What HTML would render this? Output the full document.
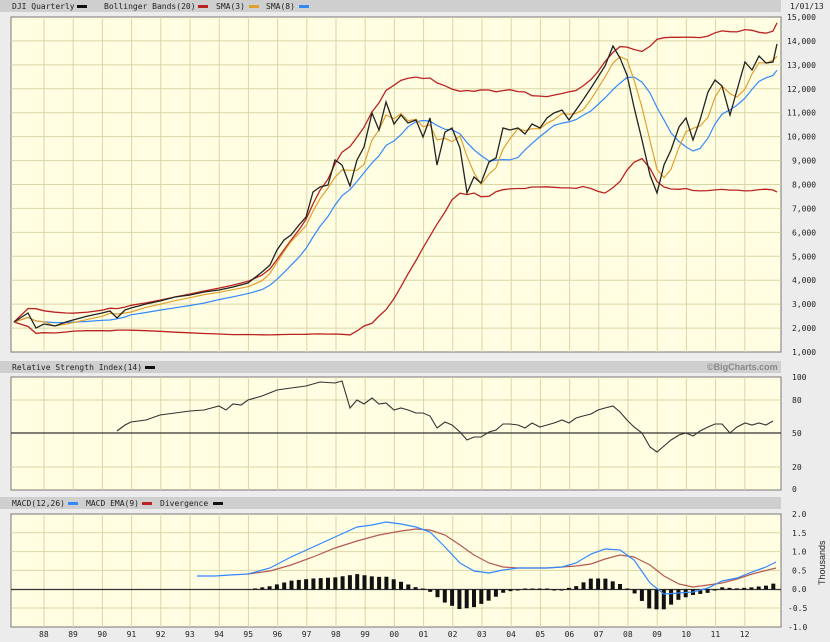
<!DOCTYPE html>
<html><head><meta charset="utf-8"><style>
html,body{margin:0;padding:0;background:#ececec;width:830px;height:642px;overflow:hidden}
svg{display:block}
text{font-family:"DejaVu Sans Mono","Liberation Mono",monospace;font-size:8px;fill:#222}
</style></head><body>
<svg id="s" width="830" height="642" xmlns="http://www.w3.org/2000/svg">
<rect x="0" y="0" width="830" height="642" fill="#ececec"/>
<rect x="0" y="0" width="781" height="12" fill="#cfcfcf"/>
<rect x="0" y="361" width="781" height="12" fill="#cfcfcf"/>
<rect x="0" y="497" width="781" height="12" fill="#cfcfcf"/>
<rect x="11" y="17" width="770" height="335" fill="#fffee2" stroke="#777" stroke-width="1"/>
<rect x="11" y="377" width="770" height="113" fill="#fffee2" stroke="#777"/>
<rect x="11" y="514" width="770" height="113" fill="#fffee2" stroke="#777"/>
<g id="grid" stroke="#d9d5a6" stroke-width="1"></g>
<g id="lines" fill="none"></g>
<text x="12" y="9">DJI Quarterly</text><rect x="77" y="5" width="10" height="3" fill="#111"/>
<text x="104" y="9">Bollinger Bands(20)</text><rect x="198" y="5" width="10" height="3" fill="#b22"/>
<text x="216" y="9">SMA(3)</text><rect x="249" y="5" width="10" height="3" fill="#e0a030"/>
<text x="266" y="9">SMA(8)</text><rect x="299" y="5" width="10" height="3" fill="#3388ff"/>
<text x="12" y="370">Relative Strength Index(14)</text><rect x="145" y="366" width="10" height="3" fill="#111"/>
<text x="12" y="506">MACD(12,26)</text><rect x="68" y="502" width="10" height="3" fill="#3388ff"/>
<text x="86" y="506">MACD EMA(9)</text><rect x="142" y="502" width="10" height="3" fill="#b22"/>
<text x="160" y="506">Divergence</text><rect x="213" y="502" width="10" height="3" fill="#111"/>
<text x="707" y="370" style="font-family:'Liberation Sans',sans-serif;font-weight:bold;fill:#888;font-size:9px">©BigCharts.com</text>
<text x="790" y="9">1/01/13</text>
<g id="lab"></g>
<text transform="translate(825,585) rotate(-90)" style="font-family:'Liberation Sans',sans-serif;font-size:9px">Thousands</text>
</svg>
<script>
var NS="http://www.w3.org/2000/svg";
function el(p,t,a,txt){var e=document.createElementNS(NS,t);for(var k in a)e.setAttribute(k,a[k]);if(txt!==undefined)e.textContent=String(txt);document.getElementById(p).appendChild(e);return e;}
for(var i=0;i<25;i++){var x=44+i*29.2; if(x>780)break;
 [[17,352],[377,490],[514,627]].forEach(function(r){el('grid','line',{x1:x,x2:x,y1:r[0],y2:r[1]});});
 var yy=(88+i)%100; el('lab','text',{x:x-5,y:637},(yy<10?'0':'')+yy);}
for(var v=2000;v<15000;v+=1000){var y=352-(v-1000)*335/14000;el('grid','line',{x1:11,x2:781,y1:y,y2:y});}
for(var v=1000;v<=15000;v+=1000){var y=352-(v-1000)*335/14000;el('lab','text',{x:v>=10000?787:792,y:y+3},(v/1000|0)+','+'000');}
[400,467].forEach(function(y){el('grid','line',{x1:11,x2:781,y1:y,y2:y});});
el('grid','line',{x1:11,x2:781,y1:433,y2:433,stroke:'#333','stroke-width':1.3});
[[100,380],[80,403],[50,436],[20,470],[0,492]].forEach(function(a){el('lab','text',{x:792,y:a[1]},a[0]);});
for(var k=1;k<6;k++){var y=514+k*18.8;if(k==4)continue;el('grid','line',{x1:11,x2:781,y1:y,y2:y});}
el('grid','line',{x1:11,x2:781,y1:589.5,y2:589.5,stroke:'#333','stroke-width':1.2});
['2.0','1.5','1.0','0.5','0.0','-0.5','-1.0'].forEach(function(t,k){el('lab','text',{x:t[0]=='-'?788:792,y:517+k*18.8},t);});
var P=[[14,322],[28,313],[36,328],[44,324],[55,326],[66,322],[73,320],[88,316],[102,313],[110,311],[117,318],[125,310],[131,308],[146,304],[160,301],[175,297],[190,295],[204,292],[219,290],[233,287],[248,283],[262,272],[270,265],[277,250],[284,240],[291,235],[299,225],[306,217],[313,192],[320,187],[328,185],[335,160],[342,165],[350,186],[357,160],[364,147],[372,113],[379,130],[386,102],[394,124],[401,115],[408,123],[416,120],[423,137],[430,118],[437,165],[445,132],[452,128],[460,148],[467,193],[474,177],[481,183],[489,162],[496,158],[503,128],[510,130],[518,128],[525,134],[532,124],[540,128],[547,118],[554,113],[562,110],[569,120],[576,110],[583,100],[591,88],[598,77],[605,66],[613,46],[620,58],[627,75],[634,107],[642,140],[650,175],[657,193],[664,165],[671,150],[679,127],[686,118],[693,140],[700,120],[708,92],[715,80],[722,86],[730,115],[737,90],[745,62],[752,70],[759,56],[766,63],[773,62],[777,44]];
function sma(n){return P.map(function(p,i){var s=0,c=0;for(var j=Math.max(0,i-n+1);j<=i;j++){s+=P[j][1];c++;}return [p[0],s/c];});}
function bb(sign){return P.map(function(p,i){var a=P.slice(Math.max(0,i-19),i+1).map(function(q){return q[1]});var m=a.reduce(function(x,y){return x+y},0)/a.length;var sd=Math.sqrt(a.reduce(function(x,y){return x+(y-m)*(y-m)},0)/a.length);var v=m+sign*2*sd;if(v>335)v=335-(v-335)*0.1;return [p[0],v];});}
function pl(pts,c,w){el('lines','polyline',{points:pts.map(function(p){return p[0]+','+p[1].toFixed(1)}).join(' '),stroke:c,'stroke-width':w||1.2});}
pl(bb(1),'#b22',1.3);pl(bb(-1),'#b22',1.3);
pl(sma(8),'#3388ff',1.2);pl(sma(3),'#e0a030',1.2);pl(P,'#222',1.3);
var R=[[117,431],[125,425],[131,422],[146,420],[160,415],[175,413],[190,411],[204,410],[219,406],[226,410],[233,404],[241,405],[248,400],[262,396],[277,390],[291,388],[306,386],[320,382],[335,383],[342,381],[350,408],[357,400],[364,404],[372,398],[379,404],[386,403],[394,410],[401,408],[408,410],[416,413],[423,413],[430,416],[437,428],[445,422],[452,425],[460,432],[467,440],[474,437],[481,437],[489,432],[496,430],[503,424],[510,424],[518,425],[525,428],[532,423],[540,427],[547,425],[554,423],[562,420],[569,423],[576,418],[583,416],[591,414],[598,410],[605,408],[613,406],[620,412],[627,420],[634,427],[642,433],[650,447],[657,452],[664,446],[671,440],[679,435],[686,433],[693,436],[700,431],[708,427],[715,424],[722,424],[730,433],[737,427],[745,423],[752,425],[759,423],[766,425],[773,421]];
pl(R,'#333',1.1);
var B=[[197,576],[215,576],[230,575],[248,574],[270,568],[291,557],[313,547],[335,537],[357,527],[372,525],[386,522],[401,524],[416,527],[430,532],[445,547],[460,563],[474,571],[489,573],[503,570],[518,568],[532,568],[547,568],[562,567],[576,563],[591,554],[605,549],[620,550],[634,560],[650,583],[664,594],[679,593],[693,592],[708,588],[722,581],[737,578],[752,572],[766,567],[776,562]];
var D=[[248,574],[270,571],[291,565],[313,557],[335,548],[357,541],[379,535],[401,531],[416,529],[430,530],[445,535],[460,545],[474,555],[489,563],[503,567],[518,568],[547,568],[576,566],[591,564],[605,559],[620,555],[634,557],[650,565],[664,576],[679,584],[693,587],[708,585],[722,583],[737,579],[752,574],[776,568]];
function at(L,x){for(var i=1;i<L.length;i++){if(x<=L[i][0]){var a=L[i-1],b=L[i];return a[1]+(b[1]-a[1])*(x-a[0])/(b[0]-a[0]);}}return L[L.length-1][1];}
for(var x=255;x<=776;x+=7.3){var d=(at(D,x)-at(B,x))*1.1;var h=Math.abs(d);if(h<1)h=1;
 el('lines','rect',{x:x-2,y:d<0?589.5:589.5-h,width:4,height:h,fill:'#111',stroke:'none'});}
pl(D,'#b55a50',1.2);pl(B,'#3388ff',1.2);
</script>
</body></html>
